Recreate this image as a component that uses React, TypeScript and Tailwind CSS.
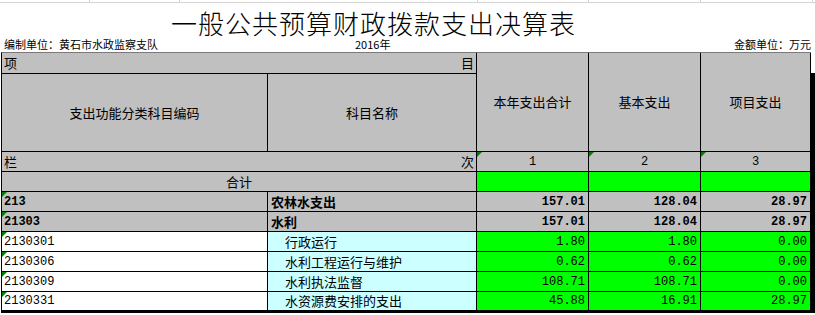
import React from "react";

const cjk = "font-['Noto_Sans_CJK_SC','Noto_Sans',sans-serif]";
const mono = "font-['Liberation_Mono','Noto_Sans_CJK_SC',monospace]";

type Row = {
  code: string;
  name: string;
  total: string;
  basic: string;
  project: string;
  bold?: boolean;
};

const rows: Row[] = [
  { code: "213", name: "农林水支出", total: "157.01", basic: "128.04", project: "28.97", bold: true },
  { code: "21303", name: "水利", total: "157.01", basic: "128.04", project: "28.97", bold: true },
  { code: "2130301", name: "行政运行", total: "1.80", basic: "1.80", project: "0.00" },
  { code: "2130306", name: "水利工程运行与维护", total: "0.62", basic: "0.62", project: "0.00" },
  { code: "2130309", name: "水利执法监督", total: "108.71", basic: "108.71", project: "0.00" },
  { code: "2130331", name: "水资源费安排的支出", total: "45.88", basic: "16.91", project: "28.97" },
];

const Flag = () => (
  <span className="absolute left-0 top-0 h-0 w-0 border-t-[5px] border-r-[5px] border-t-[#008000] border-r-transparent" />
);

const cell = "relative border-r border-b border-black flex items-center overflow-hidden whitespace-nowrap";

export default function App() {
  return (
    <div className={`w-[815px] h-[315px] bg-white text-black ${cjk}`}>
      {/* sheet gridlines above the title */}
      <div className="flex h-[3px] border-b border-[#d4d4d4]">
        <div className="w-[90px] border-r border-[#d4d4d4]" />
        <div className="w-[90px] border-r border-[#d4d4d4]" />
        <div className="w-[298px] border-r border-[#d4d4d4]" />
        <div className="w-[111px] border-r border-[#d4d4d4]" />
        <div className="w-[112px] border-r border-[#d4d4d4]" />
        <div className="w-[112px] border-r border-[#d4d4d4]" />
      </div>

      <div className="h-[34px] pl-[171px] pt-[6px] text-[26px] leading-[27px] tracking-[1px] font-light">
        一般公共预算财政拨款支出决算表
      </div>

      <div className="flex h-[15px] items-center text-[11px] leading-[15px]">
        <span className="w-[355px] pl-[4px]">编制单位：黄石市水政监察支队</span>
        <span className="flex-1">2016年</span>
        <span className="pr-[4px]">金额单位：万元</span>
      </div>

      <div className="flex">
        <div className="ml-px grid grid-cols-[266px_209px_112px_112px_110px] grid-rows-[21px_78px_20px_20px_20px_20px_20px_20px_20px_19px] border-l border-t border-t-[#7a7a7a] border-l-black border-b-2 border-b-black text-[13px]">
          {/* header */}
          <div className={`${cell} col-span-2 bg-[#c0c0c0] justify-between px-[2px]`}>
            <span>项</span>
            <span>目</span>
          </div>
          <div className={`${cell} row-span-2 bg-[#c0c0c0] justify-center`}>本年支出合计</div>
          <div className={`${cell} row-span-2 bg-[#c0c0c0] justify-center`}>基本支出</div>
          <div className={`${cell} row-span-2 bg-[#c0c0c0] justify-center`}>项目支出</div>

          <div className={`${cell} bg-[#c0c0c0] justify-center`}>支出功能分类科目编码</div>
          <div className={`${cell} bg-[#c0c0c0] justify-center`}>科目名称</div>

          <div className={`${cell} col-span-2 bg-[#c0c0c0] justify-between px-[2px]`}>
            <span>栏</span>
            <span>次</span>
          </div>
          {["1", "2", "3"].map((n) => (
            <div key={n} className={`${cell} bg-[#c0c0c0] justify-center ${mono} text-[12px]`}>
              <Flag />
              {n}
            </div>
          ))}

          <div className={`${cell} col-span-2 bg-[#c0c0c0] justify-center`}>合计</div>
          <div className={`${cell} bg-[#00ff00]`} />
          <div className={`${cell} bg-[#00ff00]`} />
          <div className={`${cell} bg-[#00ff00]`} />

          {rows.map((r) => (
            <React.Fragment key={r.code}>
              <div
                className={`${cell} pl-[2px] ${mono} text-[12px] ${
                  r.bold ? "bg-[#c0c0c0] font-bold" : "bg-white"
                }`}
              >
                <Flag />
                {r.code}
              </div>
              <div
                className={`${cell} ${
                  r.bold ? "bg-[#c0c0c0] font-bold pl-[3px]" : "bg-[#ccffff] pl-[17px]"
                }`}
              >
                {r.name}
              </div>
              {[r.total, r.basic, r.project].map((v, i) => (
                <div
                  key={i}
                  className={`${cell} justify-end pr-[3px] ${mono} text-[12px] ${
                    r.bold ? "bg-[#c0c0c0] font-bold" : "bg-[#00ff00]"
                  }`}
                >
                  {v}
                </div>
              ))}
            </React.Fragment>
          ))}
        </div>
        <div className="flex w-[4px] flex-col">
          <div className="h-[21px] bg-white" />
          <div className="flex-1 bg-black" />
        </div>
      </div>
    </div>
  );
}
